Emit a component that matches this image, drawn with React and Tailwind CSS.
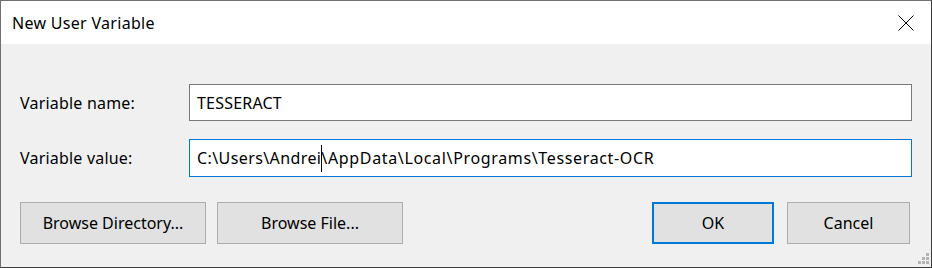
import React from "react";

export default function App() {
  return (
    <div className="relative w-[932px] h-[268px] border border-[#707070] border-r-[#3c3c3c] border-b-[#3c3c3c] bg-[#f0f0f0] flex flex-col font-['Noto_Sans','Open_Sans',sans-serif] text-[16px] text-black overflow-hidden">
      <div className="h-[43px] bg-white flex items-center justify-between pl-[11px] pr-[17px] shrink-0">
        <span className="leading-none tracking-[0.3px]">New User Variable</span>
        <svg width="16" height="16" viewBox="0 0 16 16" className="block">
          <path d="M0.5 0.5 L15.5 15.5 M15.5 0.5 L0.5 15.5" stroke="#000" strokeWidth="1" fill="none" />
        </svg>
      </div>
      <div className="flex-1 flex flex-col pl-[19px] pr-[19px] pt-[40px]">
        <div className="flex items-center">
          <div className="w-[169px] shrink-0 tracking-[0.2px]">Variable name:</div>
          <div className="flex-1 h-[37px] bg-white border border-[#7a7a7a] flex items-center pl-[7px] tracking-[0.2px]">
            TESSERACT
          </div>
        </div>
        <div className="flex items-center mt-[18px]">
          <div className="w-[169px] shrink-0 tracking-[0.2px]">Variable value:</div>
          <div className="flex-1 h-[38px] bg-white border border-[#0078d7] flex items-center pl-[7px] whitespace-nowrap">
            <span className="tracking-[0.4px]">C:\Users\Andrei</span>
            <span className="inline-block w-px h-[27px] bg-black -mr-px"></span>
            <span className="tracking-[0.65px]">\AppData\Local\Programs\Tesseract-OCR</span>
          </div>
        </div>
        <div className="flex items-center mt-[25px] pr-[2px]">
          <button className="w-[186px] h-[42px] bg-[#e1e1e1] border border-[#adadad] flex items-center justify-center">
            Browse Directory...
          </button>
          <button className="w-[186px] h-[42px] ml-[11px] bg-[#e1e1e1] border border-[#adadad] flex items-center justify-center">
            Browse File...
          </button>
          <div className="flex-1"></div>
          <button className="w-[122px] h-[42px] bg-[#e1e1e1] border-2 border-[#0078d7] flex items-center justify-center">
            OK
          </button>
          <button className="w-[123px] h-[42px] ml-[13px] bg-[#e1e1e1] border border-[#adadad] flex items-center justify-center">
            Cancel
          </button>
        </div>
      </div>
      <svg width="12" height="12" viewBox="0 0 12 12" className="absolute right-[2px] bottom-[2px]">
        <rect x="9" y="0" width="3" height="3" fill="#b4b4b4" />
        <rect x="5" y="4" width="3" height="3" fill="#b4b4b4" />
        <rect x="9" y="4" width="3" height="3" fill="#b4b4b4" />
        <rect x="1" y="8" width="3" height="3" fill="#b4b4b4" />
        <rect x="5" y="8" width="3" height="3" fill="#b4b4b4" />
        <rect x="9" y="8" width="3" height="3" fill="#b4b4b4" />
      </svg>
    </div>
  );
}
